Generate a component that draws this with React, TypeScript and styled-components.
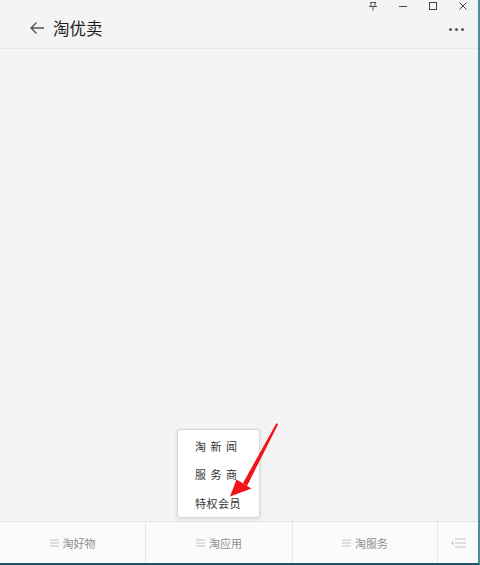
import React from "react";
import styled, { createGlobalStyle } from "styled-components";

const GlobalStyle = createGlobalStyle`
  html, body { margin: 0; padding: 0; }
  body {
    width: 480px;
    height: 565px;
    overflow: hidden;
    font-family: "Noto Sans CJK SC", "Noto Sans", sans-serif;
  }
`;

const Frame = styled.div`
  position: relative;
  width: 480px;
  height: 565px;
  box-sizing: border-box;
  display: flex;
  flex-direction: column;
  background: #f4f4f4;
  border-right: 2px solid #4e8c9c;
  border-bottom: 2px solid #1d5565;
`;

const Header = styled.div`
  height: 48px;
  flex: none;
  display: flex;
  flex-direction: column;
  border-bottom: 1px solid #e6e6e6;
`;

const Controls = styled.div`
  height: 12px;
  display: flex;
  justify-content: flex-end;
  align-items: center;
`;

const Ctl = styled.div`
  width: 30px;
  height: 12px;
  display: flex;
  align-items: center;
  justify-content: center;
`;

const TitleRow = styled.div`
  flex: 1;
  display: flex;
  align-items: center;
  padding: 0 14px 5px 29px;
`;

const Back = styled.div`
  width: 18px;
  height: 18px;
  display: flex;
  align-items: center;
  margin-right: 6px;
`;

const Title = styled.div`
  font-size: 16.5px;
  color: #1e1e1e;
  flex: 1;
`;

const More = styled.div`
  display: flex;
  gap: 3px;
  margin-top: 4px;
`;

const Dot = styled.span`
  width: 3px;
  height: 3px;
  border-radius: 50%;
  background: #555;
`;

const Body = styled.div`
  flex: 1;
`;

const TabBar = styled.div`
  height: 41px;
  flex: none;
  display: grid;
  grid-template-columns: 146px 147px 145px 1fr;
  background: #fbfbfb;
  border-top: 1px solid #e4e4e4;
`;

const Tab = styled.div<{ $last?: boolean }>`
  display: flex;
  align-items: center;
  justify-content: center;
  gap: 4px;
  font-size: 11px;
  color: #8e8e8e;
  border-right: ${(p) => (p.$last ? "none" : "1px solid #e6e6e6")};
`;

const Menu = styled.div`
  position: absolute;
  left: 177px;
  top: 429px;
  width: 83px;
  height: 89px;
  box-sizing: border-box;
  background: #fff;
  border: 1px solid #d8d8d8;
  border-radius: 3px;
  box-shadow: 0 1px 4px rgba(0, 0, 0, 0.12);
  display: flex;
  flex-direction: column;
  padding: 2px 0 0 17px;
`;

const MenuItem = styled.div<{ $spaced?: boolean }>`
  height: 29.5px;
  display: flex;
  align-items: center;
  font-size: 11px;
  color: #333;
  letter-spacing: ${(p) => (p.$spaced ? "4.5px" : "0.5px")};
  white-space: nowrap;
`;

const Arrow = styled.svg`
  position: absolute;
  left: 0;
  top: 0;
  pointer-events: none;
`;

const MenuIcon = () => (
  <svg width="9" height="8" viewBox="0 0 9 8">
    <rect x="0" y="0.5" width="9" height="1" fill="#c4c4c4" />
    <rect x="0" y="3.5" width="9" height="1" fill="#c4c4c4" />
    <rect x="0" y="6.5" width="9" height="1" fill="#c4c4c4" />
  </svg>
);

const tabs = ["淘好物", "淘应用", "淘服务"];

export default function App() {
  return (
    <>
      <GlobalStyle />
      <Frame>
        <Header>
          <Controls>
            <Ctl>
              <svg width="10" height="10" viewBox="0 0 10 10">
                <path d="M2 1.5h6M1 5.5h8M3 1.5v4M7 1.5v4M5 5.5v4" stroke="#555" strokeWidth="1" fill="none" />
              </svg>
            </Ctl>
            <Ctl>
              <svg width="10" height="10" viewBox="0 0 10 10">
                <path d="M1 5.5h8" stroke="#444" strokeWidth="1" />
              </svg>
            </Ctl>
            <Ctl>
              <svg width="10" height="10" viewBox="0 0 10 10">
                <rect x="1.5" y="1.5" width="7" height="7" stroke="#444" strokeWidth="1" fill="none" />
              </svg>
            </Ctl>
            <Ctl>
              <svg width="10" height="10" viewBox="0 0 10 10">
                <path d="M1.5 1.5l7 7M8.5 1.5l-7 7" stroke="#444" strokeWidth="1" />
              </svg>
            </Ctl>
          </Controls>
          <TitleRow>
            <Back>
              <svg width="16" height="14" viewBox="0 0 16 14">
                <path d="M15 7H2M7.5 1.5L2 7l5.5 5.5" stroke="#555" strokeWidth="1.4" fill="none" />
              </svg>
            </Back>
            <Title>淘优卖</Title>
            <More>
              <Dot />
              <Dot />
              <Dot />
            </More>
          </TitleRow>
        </Header>
        <Body />
        <TabBar>
          {tabs.map((t) => (
            <Tab key={t}>
              <MenuIcon />
              {t}
            </Tab>
          ))}
          <Tab $last>
            <svg width="16" height="10" viewBox="0 0 16 10">
              <path d="M1 5l2.5-2v4z" fill="#bbb" />
              <rect x="5" y="0.5" width="11" height="1" fill="#c4c4c4" />
              <rect x="5" y="4.5" width="11" height="1" fill="#c4c4c4" />
              <rect x="5" y="8.5" width="11" height="1" fill="#c4c4c4" />
            </svg>
          </Tab>
        </TabBar>
        <Menu>
          <MenuItem $spaced>淘新闻</MenuItem>
          <MenuItem $spaced>服务商</MenuItem>
          <MenuItem>特权会员</MenuItem>
        </Menu>
        <Arrow width="480" height="565" viewBox="0 0 480 565">
          <polygon points="276.5,423 278,424.5 247,486 243,483" fill="#f0141a" />
          <polygon points="236.5,479.5 251.5,488.5 230,496.5" fill="#f0141a" />
        </Arrow>
      </Frame>
    </>
  );
}
